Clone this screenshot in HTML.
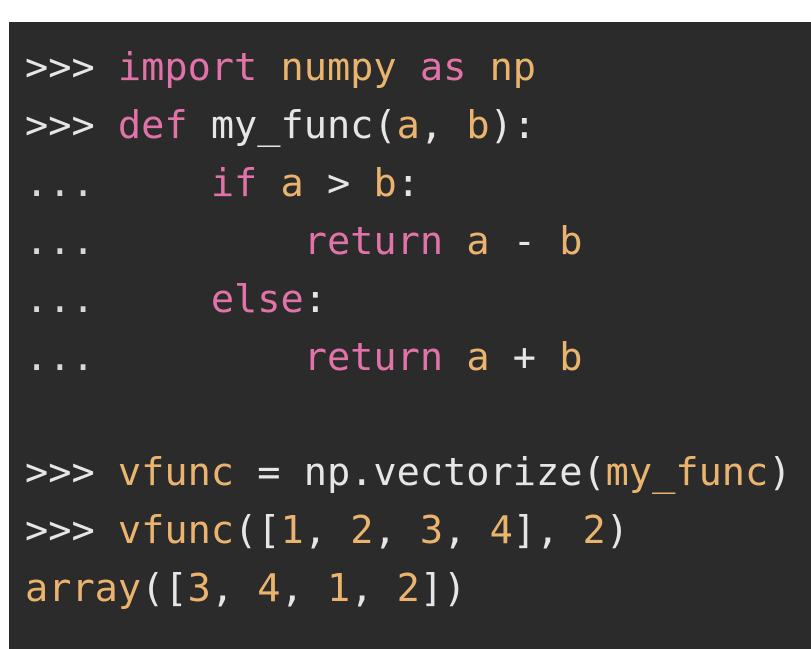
<!DOCTYPE html>
<html><head><style>
html,body{margin:0;padding:0;background:#fff;width:811px;height:649px;overflow:hidden}
.box{position:absolute;left:9px;top:22px;width:802px;height:627px;background:#2b2b2c}
pre{position:absolute;left:25px;top:39px;margin:0;font-family:"DejaVu Sans Mono","Liberation Mono",monospace;font-size:38.6px;line-height:57.9px;color:#e6e6e6;letter-spacing:0}
.k{color:#e173a8}.o{color:#ebb46e}.d{color:#d8d8d8}
</style></head><body>
<div class="box"></div>
<pre>&gt;&gt;&gt; <span class="k">import</span> <span class="o">numpy</span> <span class="k">as</span> <span class="o">np</span>
&gt;&gt;&gt; <span class="k">def</span> my_func(<span class="o">a</span>, <span class="o">b</span>):
<span class="d">...</span>     <span class="k">if</span> <span class="o">a</span> &gt; <span class="o">b</span>:
<span class="d">...</span>         <span class="k">return</span> <span class="o">a</span> - <span class="o">b</span>
<span class="d">...</span>     <span class="k">else</span>:
<span class="d">...</span>         <span class="k">return</span> <span class="o">a</span> + <span class="o">b</span>

&gt;&gt;&gt; <span class="o">vfunc</span> = np.vectorize(<span class="o">my_func</span>)
&gt;&gt;&gt; <span class="o">vfunc</span>([<span class="o">1</span>, <span class="o">2</span>, <span class="o">3</span>, <span class="o">4</span>], <span class="o">2</span>)
<span class="o">array</span>([<span class="o">3</span>, <span class="o">4</span>, <span class="o">1</span>, <span class="o">2</span>])</pre>
</body></html>
